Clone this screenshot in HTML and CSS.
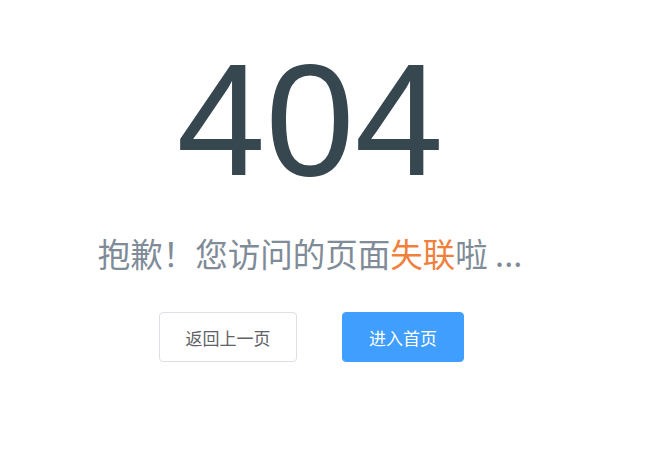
FILE: index.html
```html
<!DOCTYPE html>
<html lang="zh-CN">
<head>
<meta charset="utf-8">
<title>404</title>
<link rel="stylesheet" href="styles.css">
</head>
<body>
<div class="page">
  <div class="code">404</div>
  <div class="msg">抱歉！您访问的页面<span class="lost">失联</span>啦 ...</div>
  <div class="actions">
    <button class="btn btn-default">返回上一页</button>
    <button class="btn btn-primary">进入首页</button>
  </div>
</div>
</body>
</html>
```

FILE: styles.css
```css
html, body {
  margin: 0;
  padding: 0;
  background: #ffffff;
}
.page {
  width: 620px;
  display: flex;
  flex-direction: column;
  align-items: center;
  padding-top: 40px;
  font-family: "Liberation Sans", "Noto Sans CJK SC", sans-serif;
}
.code {
  font-family: "Liberation Sans", Arial, sans-serif;
  font-size: 160px;
  line-height: 160px;
  height: 160px;
  color: #37474f;
}
.msg {
  margin-top: 33px;
  font-family: "Noto Sans CJK SC", sans-serif;
  font-size: 32.5px;
  line-height: 40px;
  color: #7f8c98;
}
.lost {
  color: #f0803c;
}
.actions {
  margin-top: 39px;
  margin-left: 3px;
  display: flex;
  gap: 45px;
}
.btn {
  height: 50px;
  padding: 0;
  border-radius: 4px;
  font-family: "Noto Sans CJK SC", sans-serif;
  font-size: 17px;
  cursor: pointer;
}
.btn-default {
  width: 138px;
  background: #ffffff;
  border: 1px solid #dcdfe6;
  color: #606266;
}
.btn-primary {
  width: 122px;
  background: #409eff;
  border: 1px solid #409eff;
  color: #ffffff;
}
```
